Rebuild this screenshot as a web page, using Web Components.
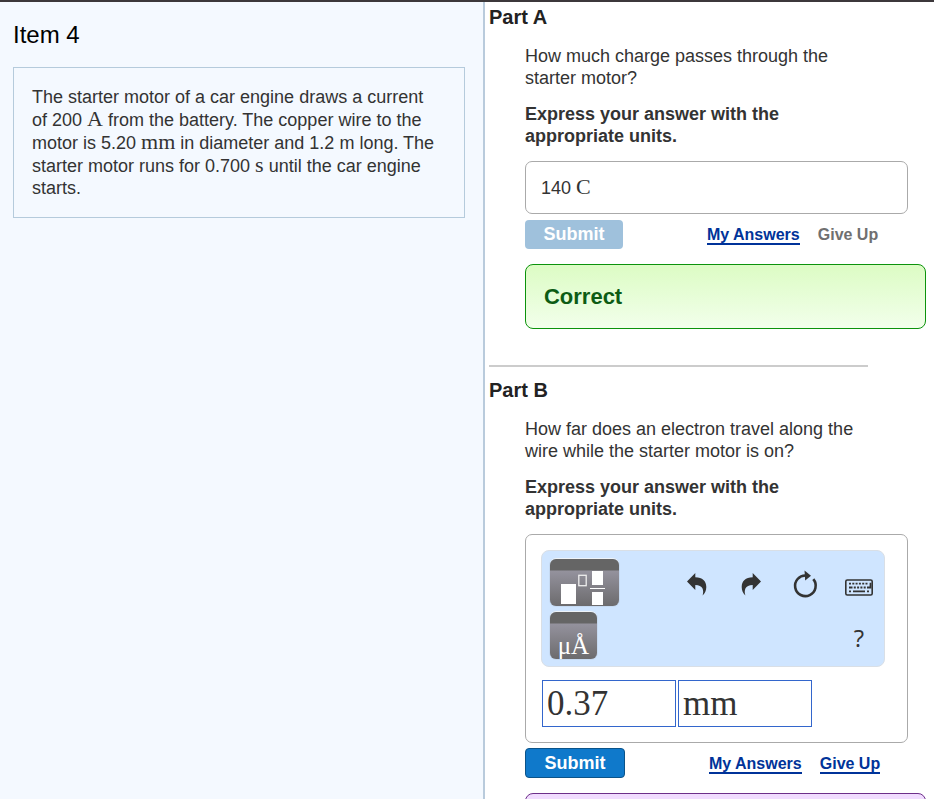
<!DOCTYPE html>
<html lang="en">
<head>
  <meta charset="utf-8">
  <meta name="viewport" content="width=device-width, initial-scale=1">
  <title>Item 4</title>
  <style>
    body {
      margin: 0;
      font-family: "Liberation Sans", Arial, sans-serif;
      font-size: 18px;
      line-height: 22px;
      color: #333;
      background-color: #fff;
    }
  </style>
</head>
<body>
  <assignment-page>
    <problem-statement slot="item" heading="Item 4">
      The starter motor of a car engine draws a current of 200 <math-unit>A</math-unit> from the battery. The copper wire to the motor is 5.20 <math-unit>mm</math-unit> in diameter and 1.2 m long. The starter motor runs for 0.700 <math-unit>s</math-unit> until the car engine starts.
    </problem-statement>

    <question-part heading="Part A">
      <span slot="question">How much charge passes through the starter motor?</span>
      <answer-box slot="answer">140 <math-unit>C</math-unit></answer-box>
      <answer-actions slot="actions" done></answer-actions>
      <feedback-panel slot="feedback" kind="correct">Correct</feedback-panel>
    </question-part>

    <question-part heading="Part B" divided>
      <span slot="question">How far does an electron travel along the wire while the starter motor is on?</span>
      <answer-box slot="answer">
        <math-toolbar></math-toolbar>
        <unit-answer value="0.37" unit="mm"></unit-answer>
      </answer-box>
      <answer-actions slot="actions"></answer-actions>
      <feedback-panel slot="feedback" kind="retry"></feedback-panel>
    </question-part>
  </assignment-page>

  <script>
    class BaseElement extends HTMLElement {
      constructor() {
        super();
        this.shadowDOM = this.attachShadow({ mode: 'open' });
      }

      connectedCallback() {
        this.render();
      }
    }

    class AssignmentPage extends BaseElement {
      render() {
        this.shadowDOM.innerHTML = `
          <style>
            :host {
              display: grid;
              grid-template-columns: minmax(0, 27fr) minmax(0, 25fr);
              height: 100vh;
              box-sizing: border-box;
              border-top: 2px solid #3c383b;
            }
            aside {
              background-color: #f4f9ff;
              border-right: 2px solid #b9cbdc;
              overflow: hidden;
            }
            main {
              padding: 3px 8px 0 4px;
              overflow-y: auto;
              scrollbar-width: none;
            }
          </style>
          <aside><slot name="item"></slot></aside>
          <main><slot></slot></main>
        `;
      }
    }

    class ProblemStatement extends BaseElement {
      render() {
        this.shadowDOM.innerHTML = `
          <style>
            :host {
              display: block;
              padding: 18px 18px 0 13px;
            }
            h1 {
              margin: 0 0 17px;
              font-size: 24px;
              font-weight: normal;
              line-height: 30px;
              color: #000;
            }
            p {
              margin: 0;
              padding: 18px 24px 18px 18px;
              border: 1px solid #b5cbdc;
            }
          </style>
          <h1>${this.getAttribute('heading')}</h1>
          <p><slot></slot></p>
        `;
      }
    }

    class MathUnit extends BaseElement {
      render() {
        this.shadowDOM.innerHTML = `
          <style>
            :host {
              display: inline;
              font-family: "Liberation Serif", "Times New Roman", serif;
              font-size: 22px;
            }
          </style><slot></slot>`;
      }
    }

    class QuestionPart extends BaseElement {
      render() {
        this.shadowDOM.innerHTML = `
          <style>
            :host {
              display: block;
            }
            :host([divided]) {
              margin-top: 36px;
            }
            hr {
              margin: 0 58px 11px 0;
              border: 0;
              border-top: 2px solid #ccc;
            }
            h2 {
              margin: 0 0 16px;
              font-size: 20px;
              line-height: 24px;
              color: #222;
            }
            .content {
              margin-left: 36px;
            }
            p {
              margin: 0 58px 14px 0;
            }
            .instruction {
              font-weight: bold;
            }
          </style>
          ${this.hasAttribute('divided') ? '<hr>' : ''}
          <h2>${this.getAttribute('heading')}</h2>
          <div class="content">
            <p><slot name="question"></slot></p>
            <p class="instruction">Express your answer with the appropriate units.</p>
            <slot name="answer"></slot>
            <slot name="actions"></slot>
            <slot name="feedback"></slot>
          </div>
        `;
      }
    }

    class AnswerBox extends BaseElement {
      render() {
        this.shadowDOM.innerHTML = `
          <style>
            :host {
              display: block;
              margin-right: 18px;
              padding: 15px;
              border: 1px solid #aaa;
              border-radius: 7px;
              line-height: 20px;
            }
          </style>
          <slot></slot>
        `;
      }
    }

    class AnswerActions extends BaseElement {
      render() {
        const done = this.hasAttribute('done');
        this.shadowDOM.innerHTML = `
          <style>
            :host {
              display: flex;
              align-items: center;
              gap: 18px;
              min-height: 30px;
              margin: 5px 0 15px;
            }
            button {
              margin-right: 66px;
              padding: 0;
              width: 100px;
              height: 30px;
              border: 1px solid #0b5389;
              border-radius: 4px;
              background-color: #0f79cb;
              color: #fff;
              font: bold 18px/28px "Liberation Sans", Arial, sans-serif;
              cursor: pointer;
            }
            button:disabled {
              width: 98px;
              height: 29px;
              border-width: 0;
              background-color: #9fc1dc;
              cursor: default;
            }
            a {
              margin-top: 2px;
              border-bottom: 2px solid transparent;
              font-size: 16px;
              font-weight: bold;
              line-height: 17px;
              color: #707070;
              text-decoration: none;
              white-space: nowrap;
            }
            a[href] {
              border-color: #039;
              color: #039;
            }
          </style>
          <button type="submit" ${done ? 'disabled' : ''}>Submit</button>
          <a href="#answers">My Answers</a>
          <a ${done ? 'aria-disabled="true"' : 'href="#give-up"'}>Give Up</a>
        `;
      }
    }

    class FeedbackPanel extends BaseElement {
      render() {
        this.shadowDOM.innerHTML = `
          <style>
            :host {
              display: block;
              box-sizing: border-box;
              min-height: 65px;
              padding: 19px 18px;
              border: 1px solid #6d2f8a;
              border-radius: 8px;
              background-color: #f1dcff;
              font-size: 22px;
              font-weight: bold;
              line-height: 25px;
            }
            :host([kind="correct"]) {
              border-color: #0c930c;
              background: linear-gradient(#dcfcc4, #f2ffeb);
              color: #0d5c14;
            }
          </style>
          <slot></slot>
        `;
      }
    }

    class MathToolbar extends BaseElement {
      render() {
        this.shadowDOM.innerHTML = `
          <style>
            :host {
              display: flex;
              justify-content: space-between;
              margin: 0 7px 13px 0;
              padding: 8px 10px 7px 8px;
              border: 1px solid #d9dfe6;
              border-radius: 8px;
              background-color: #cfe5ff;
            }
            button {
              display: flex;
              justify-content: center;
              align-items: center;
              padding: 0;
              border: 0;
              background: none;
              color: #333;
              cursor: pointer;
            }
            .palettes {
              display: grid;
              justify-items: start;
              gap: 6px;
            }
            .palettes button {
              width: 47px;
              height: 47px;
              border-radius: 6px;
              box-shadow: 0 -1px 0 #eef3f8, 0 0 1px #777;
              background: linear-gradient(#656565 11px, #94929d 12px, #6c6b6d);
              color: #fff;
              align-items: flex-end;
            }
            .palettes .templates {
              width: 69px;
            }
            .palettes .units {
              font: 25px/26px "Liberation Serif", "Times New Roman", serif;
            }
            .tools {
              display: grid;
              grid-template-columns: repeat(4, 30px);
              grid-auto-rows: 47px;
              column-gap: 24px;
              row-gap: 6px;
            }
            .tools button {
              padding-top: 4px;
            }
            .tools .help {
              grid-column: 4;
              font: 24px/30px "Open Sans", sans-serif;
            }
            svg {
              display: block;
            }
          </style>
          <div class="palettes">
            <button class="templates" type="button" aria-label="Templates">
              <svg width="69" height="47" viewBox="0 0 69 47">
                <g fill="#fff">
                  <rect x="11" y="25" width="15" height="20"/>
                  <rect x="42" y="12" width="11" height="14"/>
                  <rect x="40" y="29" width="15" height="1"/>
                  <rect x="42" y="33" width="11" height="13"/>
                </g>
                <rect x="28.800" y="16.300" width="7.400" height="10.400" fill="none" stroke="#eee" stroke-width="1.300"/>
              </svg>
            </button>
            <button class="units" type="button" aria-label="Units">μÅ</button>
          </div>
          <div class="tools">
            <button type="button" aria-label="Undo">
              <svg width="30" height="36" viewBox="0 0 30 36">
                <path fill="#333" d="M5 14.500 13.300 6v4.300C20.500 10.500 24.300 14 24.300 20c0 3.500-1.300 6.200-3.700 8.500 1.600-5.500.4-10.300-7.300-10.600V23z"/>
              </svg>
            </button>
            <button type="button" aria-label="Redo">
              <svg width="30" height="36" viewBox="0 0 30 36">
                <path fill="#333" d="M25 14.500 16.700 6v4.300C9.500 10.500 5.700 14 5.700 20c0 3.500 1.300 6.200 3.700 8.500-1.600-5.500-.4-10.300 7.300-10.600V23z"/>
              </svg>
            </button>
            <button type="button" aria-label="Reset">
              <svg width="30" height="36" viewBox="0 0 30 36">
                <path fill="none" stroke="#333" stroke-width="2.600" d="M23.300 12.200A10.300 10.300 0 1 1 16 8.500"/>
                <path fill="#333" d="M14.500 3.500 21 8.800l-5.800 4.700z"/>
              </svg>
            </button>
            <button type="button" aria-label="Keyboard">
              <svg width="30" height="36" viewBox="0 0 30 36">
                <rect x="1.800" y="13" width="26.400" height="15" rx="1.500" fill="none" stroke="#333" stroke-width="1.600"/>
                <path fill="none" stroke="#333" stroke-width="1.800" d="M5 16.700h2m1.300 0h2m1.300 0h2m1.300 0h2m1.300 0h2m1.300 0h2M5 20.500h3.500m1.300 0h2m1.300 0h2m1.300 0h2m1.300 0h2m1.300 0h3.500v-4.700M5 24.300h2m2 0h12m2 0h2"/>
              </svg>
            </button>
            <button class="help" type="button">?</button>
          </div>
        `;
      }
    }

    class UnitAnswer extends BaseElement {
      render() {
        this.shadowDOM.innerHTML = `
          <style>
            :host {
              display: flex;
              gap: 2px;
              padding-left: 1px;
            }
            input {
              box-sizing: border-box;
              width: 134px;
              min-width: 0;
              height: 47px;
              padding: 0 4px;
              border: 1px solid #36c;
              border-radius: 0;
              background-color: #fff;
              color: #333;
              font: 35px "Liberation Serif", "Times New Roman", serif;
            }
          </style>
          <input type="text" aria-label="Value" value="${this.getAttribute('value')}">
          <input type="text" aria-label="Units" value="${this.getAttribute('unit')}">
        `;
      }
    }

    customElements.define('assignment-page', AssignmentPage);
    customElements.define('problem-statement', ProblemStatement);
    customElements.define('math-unit', MathUnit);
    customElements.define('question-part', QuestionPart);
    customElements.define('answer-box', AnswerBox);
    customElements.define('answer-actions', AnswerActions);
    customElements.define('feedback-panel', FeedbackPanel);
    customElements.define('math-toolbar', MathToolbar);
    customElements.define('unit-answer', UnitAnswer);
  </script>
</body>
</html>
